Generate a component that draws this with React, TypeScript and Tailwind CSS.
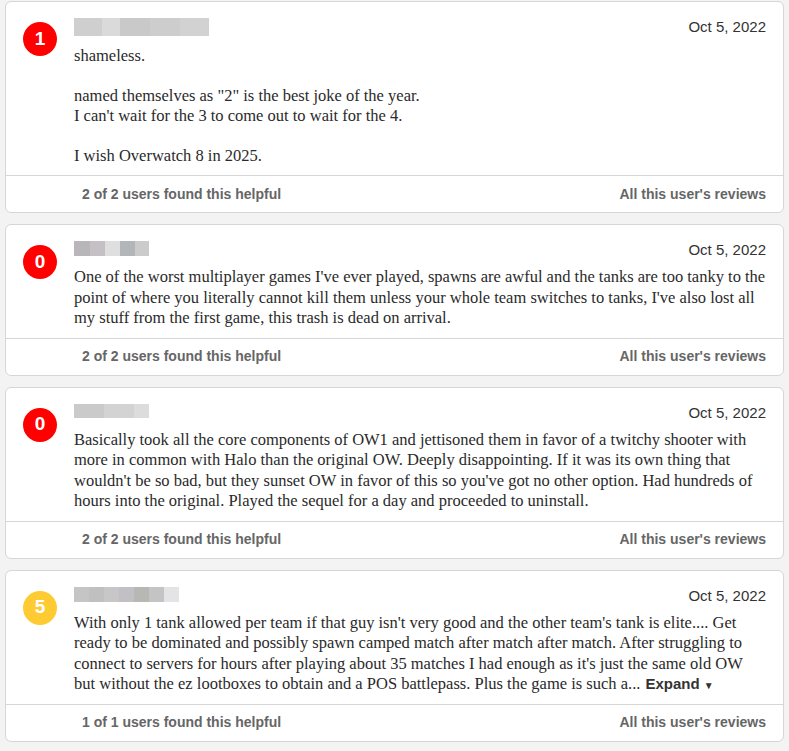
import * as React from 'react'

type Review = {
  score: string
  color: string
  name: { w: number; c: string }[]
  nameH: number
  lineH: string
  bodyTop: string
  lines: string[]
  expand?: boolean
  helpful: string
}

const reviews: Review[] = [
  {
    score: '1',
    color: 'bg-[#ff0000]',
    nameH: 18,
    lineH: 'h-[20px]',
    bodyTop: 'mt-[9px]',
    name: [
      { w: 28, c: '#cfcfcf' },
      { w: 18, c: '#dadada' },
      { w: 30, c: '#c9c9c9' },
      { w: 30, c: '#cdcdcd' },
      { w: 29, c: '#d2d2d2' },
    ],
    lines: [
      'shameless.',
      '',
      'named themselves as "2" is the best joke of the year.',
      "I can't wait for the 3 to come out to wait for the 4.",
      '',
      'I wish Overwatch 8 in 2025.',
    ],
    helpful: '2 of 2 users found this helpful',
  },
  {
    score: '0',
    color: 'bg-[#ff0000]',
    nameH: 15,
    lineH: 'h-[20.5px]',
    bodyTop: 'mt-[7px]',
    name: [
      { w: 16, c: '#b8b6b8' },
      { w: 15, c: '#c4c0c4' },
      { w: 15, c: '#e0dfdf' },
      { w: 15, c: '#b3b6b9' },
      { w: 14, c: '#cbcbcb' },
    ],
    lines: [
      "One of the worst multiplayer games I've ever played, spawns are awful and the tanks are too tanky to the",
      "point of where you literally cannot kill them unless your whole team switches to tanks, I've also lost all",
      'my stuff from the first game, this trash is dead on arrival.',
    ],
    helpful: '2 of 2 users found this helpful',
  },
  {
    score: '0',
    color: 'bg-[#ff0000]',
    nameH: 14,
    lineH: 'h-[20.5px]',
    bodyTop: 'mt-[7px]',
    name: [
      { w: 30, c: '#cacaca' },
      { w: 30, c: '#d3d3d3' },
      { w: 15, c: '#dcdcdc' },
    ],
    lines: [
      'Basically took all the core components of OW1 and jettisoned them in favor of a twitchy shooter with',
      'more in common with Halo than the original OW. Deeply disappointing. If it was its own thing that',
      "wouldn't be so bad, but they sunset OW in favor of this so you've got no other option. Had hundreds of",
      'hours into the original. Played the sequel for a day and proceeded to uninstall.',
    ],
    helpful: '2 of 2 users found this helpful',
  },
  {
    score: '5',
    color: 'bg-[#ffcb33]',
    nameH: 15,
    lineH: 'h-[20.5px]',
    bodyTop: 'mt-[7px]',
    name: [
      { w: 15, c: '#c5c5c5' },
      { w: 15, c: '#c0c0c0' },
      { w: 15, c: '#c7c7c7' },
      { w: 15, c: '#c2c0c4' },
      { w: 15, c: '#b7b8b4' },
      { w: 15, c: '#c4c4c4' },
      { w: 15, c: '#e4e4e6' },
    ],
    lines: [
      "With only 1 tank allowed per team if that guy isn't very good and the other team's tank is elite.... Get",
      'ready to be dominated and possibly spawn camped match after match after match. After struggling to',
      "connect to servers for hours after playing about 35 matches I had enough as it's just the same old OW",
      'but without the ez lootboxes to obtain and a POS battlepass. Plus the game is such a...',
    ],
    expand: true,
    helpful: '1 of 1 users found this helpful',
  },
]

function Name({ parts, h }: { parts: Review['name']; h: number }) {
  return (
    <div className="mt-px flex blur-[0.6px]" style={{ height: h }}>
      {parts.map((p, i) => (
        <div key={i} style={{ width: p.w, background: p.c }} />
      ))}
    </div>
  )
}

function Card({ r }: { r: Review }) {
  return (
    <div className="mb-[11px] rounded-[6px] border border-[#d6d6d6] bg-white">
      <div className="flex gap-[17px] pb-[9px] pl-[17px] pr-[17px] pt-[15px]">
        <div
          className={`mt-[5px] flex h-[34px] w-[34px] shrink-0 items-center justify-center rounded-full ${r.color} font-['Liberation_Sans',Arial,sans-serif] text-[19px] font-bold text-white`}
        >
          {r.score}
        </div>
        <div className="flex-1">
          <div className="flex h-[20px] items-start justify-between">
            <Name parts={r.name} h={r.nameH} />
            <div className="font-['Liberation_Sans',Arial,sans-serif] text-[15px] leading-[20px] text-[#333]">
              Oct 5, 2022
            </div>
          </div>
          <div
            className={`${r.bodyTop} whitespace-nowrap font-['Liberation_Serif',Georgia,serif] text-[16.5px] leading-[20px] text-[#2a2a2a]`}
          >
            {r.lines.map((l, i) => (
              <div key={i} className={r.lineH}>
                {l}
                {r.expand && i === r.lines.length - 1 && (
                  <span className="ml-[5px] font-['Liberation_Sans',Arial,sans-serif] text-[15px] font-bold text-[#333]">
                    Expand <span className="text-[10px]">▼</span>
                  </span>
                )}
              </div>
            ))}
          </div>
        </div>
      </div>
      <div className="flex h-[37px] items-center justify-between border-t border-[#d6d6d6] pl-[76px] pr-[17px] font-['Liberation_Sans',Arial,sans-serif] text-[14px] font-bold text-[#666]">
        <span>{r.helpful}</span>
        <span>All this user's reviews</span>
      </div>
    </div>
  )
}

export default function App() {
  return (
    <div className="min-h-[751px] bg-[#f3f3f3] px-[5px] pt-px">
      {reviews.map((r, i) => (
        <Card key={i} r={r} />
      ))}
      <div className="h-[20px] rounded-t-[6px] border border-[#d6d6d6] bg-white" />
    </div>
  )
}
